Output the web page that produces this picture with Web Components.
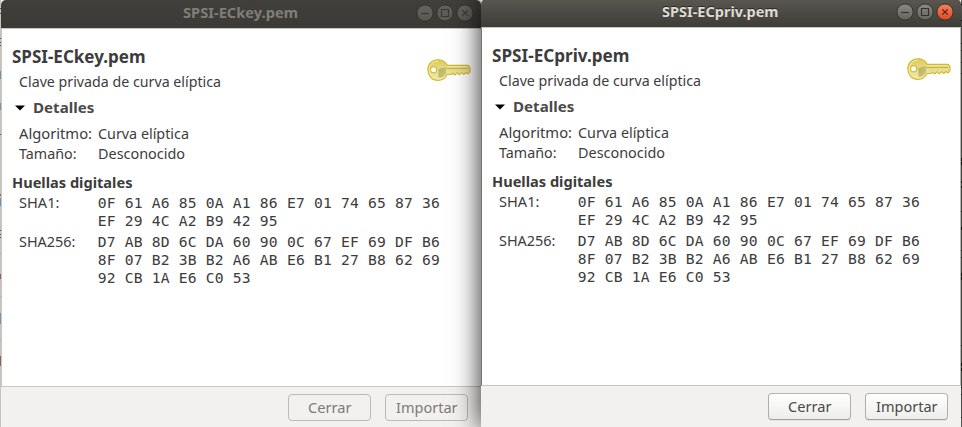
<!DOCTYPE html>
<html lang="es"><head><meta charset="utf-8"><title>Claves</title>
<style>
body{margin:0;width:962px;height:427px;overflow:hidden;background:#c4c3bf;font-family:"Noto Sans","Open Sans",sans-serif}
.desk{display:grid;grid-template-columns:1px 480px 480px 1px;height:427px}
cert-window{z-index:1}
cert-window[active]{z-index:2}
</style></head><body>
<div class="desk">
<edge-strip side="left"></edge-strip>
<cert-window title-text="SPSI-ECkey.pem" title-width="115" heading-width="133.5"></cert-window>
<cert-window active title-text="SPSI-ECpriv.pem" title-width="116.5" heading-width="137.5"></cert-window>
<edge-strip side="right"></edge-strip>
</div>
<script>
/* Text run set to a given advance width. */
class FitText extends HTMLElement{
  constructor(){super();this.attachShadow({mode:'open'}).innerHTML=`<style>:host{display:inline-block;white-space:nowrap;vertical-align:top}span{display:inline-block;transform-origin:0 50%}</style><span><slot></slot></span>`}
  connectedCallback(){
    const w=parseFloat(this.getAttribute('w')),s=this.shadowRoot.querySelector('span');
    this.style.width=w+'px';
    const m=s.getBoundingClientRect().width;
    if(m)s.style.transform=`scaleX(${w/m})`;
  }
}
class KeyIcon extends HTMLElement{
  constructor(){super();this.attachShadow({mode:'open'}).innerHTML=`<style>:host{display:block;width:44px;height:23px}svg{display:block}</style>
<svg width="44" height="23" viewBox="0 0 44 23"><defs>
<linearGradient id="g" x1="0" y1="0" x2="0" y2="1"><stop offset="0" stop-color="#dccb58"/><stop offset=".5" stop-color="#e6dd8c"/><stop offset="1" stop-color="#efe9ad"/></linearGradient>
<linearGradient id="s" x1="0" y1="0" x2="1" y2="1"><stop offset="0" stop-color="#b5ac62"/><stop offset="1" stop-color="#d2c980"/></linearGradient></defs>
<path d="M10.8.7C5 .7.8 5 .8 10.8S5 21.4 11 21.4c4.2 0 7.3-2.2 9-5.9h4.2l1.6-1.4 2 1.9 2.4-2.4 2 2.2 2.4-2.2 2.2 1.9 2.2-2 1.6 1.2h.8l1.6-1.9V8.4l-1.8-2H20.4C18.6 3 15.6.7 10.8.7z" fill="url(#g)" stroke="#d3b92e" stroke-width="1.1" stroke-linejoin="round"/>
<path d="M11 2.1c-5.3 0-8.7 3.9-8.7 8.7s3.5 9.1 8.9 9.1c3.8 0 6-2 7.6-5.3" fill="none" stroke="#f2ebaa" stroke-width="1"/>
<path d="M11.5 10l7.5-1.8v6.2c-1.2 2.2-3.5 4.3-7.5 4.3z" fill="url(#s)"/>
<path d="M19.5 7.6h21.4" stroke="#efe8a4" stroke-width="1"/>
<path d="M19.5 9h21.6v.9H19.5z" fill="#c3b04a"/>
<circle cx="6.6" cy="10.8" r="3.1" fill="#fff" stroke="#d9bd30" stroke-width="1.2"/></svg>`}
}
class WindowControl extends HTMLElement{
  constructor(){super();this.attachShadow({mode:'open'})}
  connectedCallback(){
    const k=this.getAttribute('kind'),a=this.hasAttribute('active'),c=k==='close'&&a;
    const top=c?'#f5805d':a?'#8c8a84':'#64625d',bot=c?'#dd4b22':a?'#65635d':'#5a5853',ink=c?'#4b1e10':a?'#33322d':'#393833';
    const d={min:'M5.2 9.5h7.6',max:'M5.5 5.5h7v7h-7z',close:'M6.3 6.3l5.4 5.4M11.7 6.3l-5.4 5.4'}[k];
    this.shadowRoot.innerHTML=`<style>:host{display:block;width:18px;height:18px}svg{display:block}</style><svg width="18" height="18"><defs><linearGradient id="b" x1="0" y1="0" x2="0" y2="1"><stop stop-color="${top}"/><stop offset="1" stop-color="${bot}"/></linearGradient></defs><circle cx="9" cy="9" r="8.1" fill="url(#b)" stroke="#32312d" stroke-width=".9"/><path d="${d}" fill="none" stroke="${ink}" stroke-width="1.15"/></svg>`;
  }
}
class DialogButton extends HTMLElement{
  constructor(){super();this.attachShadow({mode:'open'}).innerHTML=`<style>
:host{box-sizing:border-box;display:flex;justify-content:center;width:83px;height:27px;border:1px solid #bcbab6;border-radius:4px;background:#f2f1ef;color:#7d7b77;font-size:14.2px;line-height:25px}
:host([active]){background:linear-gradient(#fff,#ededeb);border-color:#b5b3af #b0aeaa #a19f9b;color:#4b4a47;box-shadow:0 1px 0 #e5e4e1}
</style><slot></slot>`}
}
class CertWindow extends HTMLElement{
  constructor(){super();this.attachShadow({mode:'open'})}
  connectedCallback(){
    const t=this.getAttribute('title-text'),on=this.hasAttribute('active'),a=on?'active':'';
    this.shadowRoot.innerHTML=`<style>
:host{display:flex;flex-direction:column;box-sizing:border-box;height:428px;background:#f2f1ef;color:#3c3c3c;font-size:14.2px;line-height:20px}
:host([active]){margin-top:-1px;height:429px;box-shadow:0 0 26px rgba(0,0,0,.85)}
.bar{flex:none;display:grid;grid-template-columns:68px 1fr 68px;align-items:center;height:28px;box-sizing:border-box;padding:0 1px 2px 0;background:linear-gradient(#403f3b,#3b3a36);color:#817e78;font-weight:700;border-radius:5px 5px 0 0}
:host([active]) .bar{background:linear-gradient(#5a574f,#3d3c38);color:#dfdbd2;text-shadow:0 -1px 0 #292824}
.bar fit-text{grid-column:2;justify-self:center}
.ctl{display:flex;gap:2px;justify-content:flex-end;padding-right:6px}
.client{flex:none;height:359px;box-sizing:border-box;background:#fff;border:solid #c9c6c1;border-width:1px 0 1px 1px;padding:16px 10px 0 10px}
:host([active]) .client{border-left-color:#777570;border-right:1px solid #b7b5b0;padding-right:9px}
.head{display:flex;justify-content:space-between;height:47px}
.head key-icon{margin-top:14px}
h1{font-size:17.2px;line-height:23px;font-weight:700;margin:0;height:27px}
.sub{padding-left:6.5px}
.exp{display:flex;align-items:center;height:24px;padding-left:3px;margin-top:4px;color:#4a4a4a;font-weight:700}
.exp svg{margin:-1px 7.5px 0 0}
.rows{display:grid;grid-template-columns:79px 1fr;padding-left:6.5px}
.info{margin-top:4px}
.sec{font-weight:700;height:21px;margin-top:9px}
pre{margin:0 0 0 .3px;font:14.67px/18px "DejaVu Sans Mono",monospace;letter-spacing:.18px}
.hash{row-gap:3px}
.hash fit-text{line-height:18px}
.foot{display:flex;justify-content:flex-end;gap:14px;padding:7px 13px 0 0}
</style>
<div class="bar"><fit-text w="${this.getAttribute('title-width')}">${t}</fit-text><div class="ctl"><window-control kind="min" ${a}></window-control><window-control kind="max" ${a}></window-control><window-control kind="close" ${a}></window-control></div></div>
<div class="client">
<div class="head"><div><h1><fit-text w="${this.getAttribute('heading-width')}">${t}</fit-text></h1><div class="sub"><fit-text w="202">Clave privada de curva elíptica</fit-text></div></div><key-icon></key-icon></div>
<div class="exp"><svg width="10" height="6"><path d="M0 .5h10L5 5.6z" fill="#000"/></svg><fit-text w="61.3">Detalles</fit-text></div>
<div class="rows info"><fit-text w="73">Algoritmo:</fit-text><fit-text w="91">Curva elíptica</fit-text><fit-text w="57.5">Tamaño:</fit-text><fit-text w="87">Desconocido</fit-text></div>
<div class="sec"><fit-text w="120.5">Huellas digitales</fit-text></div>
<div class="rows hash"><fit-text w="40.5">SHA1:</fit-text><pre>0F 61 A6 85 0A A1 86 E7 01 74 65 87 36
EF 29 4C A2 B9 42 95</pre><fit-text w="56.5">SHA256:</fit-text><pre>D7 AB 8D 6C DA 60 90 0C 67 EF 69 DF B6
8F 07 B2 3B B2 A6 AB E6 B1 27 B8 62 69
92 CB 1A E6 C0 53</pre></div>
</div>
<div class="foot"><dialog-button ${a}><fit-text w="43.5">Cerrar</fit-text></dialog-button><dialog-button ${a}><fit-text w="61.5">Importar</fit-text></dialog-button></div>`;
  }
}
/* Slivers of whatever lies behind the windows. */
class EdgeStrip extends HTMLElement{
  constructor(){super();this.attachShadow({mode:'open'})}
  connectedCallback(){
    const l=this.getAttribute('side')==='left';
    const marks=l?[[8,1,'#555'],[13,1,'#555'],[38,1,'#555'],[42,1,'#555'],[45,1,'#555'],[71,8,'#6c91bd'],[103,7,'#6c91bd'],[134,1,'#555'],[194,2,'#a55c54'],[198,8,'#6890c4'],[230,1,'#555'],[234,1,'#555'],[237,1,'#555'],[253,1,'#aaa'],[274,5,'#985c55'],[296,1,'#aaa'],[313,11,'#7094c0'],[339,1,'#aaa'],[356,10,'#965e57']]
    :[[4,1],[20,1],[43,1],[50,1],[62,1],[73,1],[158,3],[162,3],[181,2],[186,2],[211,1],[227,3],[250,1],[257,1],[273,3],[277,3],[345,1],[363,3],[368,3],[387,1],[394,1],[417,1]];
    this.shadowRoot.innerHTML=`<style>:host{display:block}svg{display:block}</style><svg width="1" height="427"><path fill="${l?'#c5c4c0':'#777'}" d="M0 0h1v427H0z"/>${marks.map(([y,h,c='#151515'])=>`<path fill="${c}" d="M0 ${y}h1v${h}H0z"/>`).join('')}</svg>`;
  }
}
customElements.define('fit-text',FitText);
customElements.define('key-icon',KeyIcon);
customElements.define('window-control',WindowControl);
customElements.define('dialog-button',DialogButton);
customElements.define('cert-window',CertWindow);
customElements.define('edge-strip',EdgeStrip);
</script></body></html>
